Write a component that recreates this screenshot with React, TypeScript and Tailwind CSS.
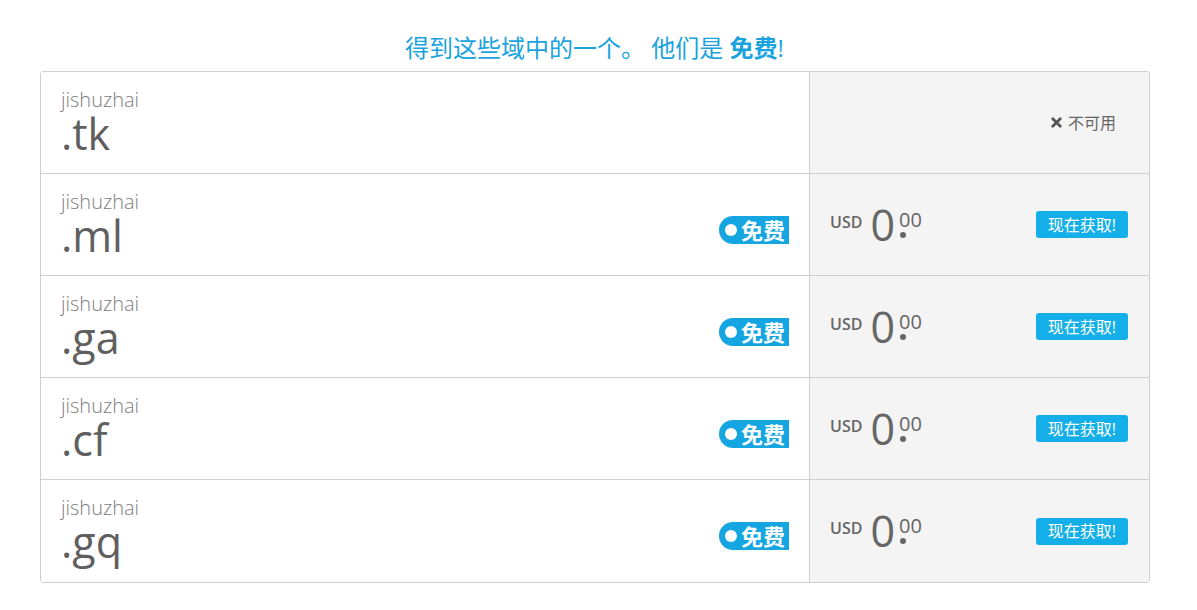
import { X } from "lucide-react";

const FONT = "font-['Open_Sans','Noto_Sans_CJK_SC',sans-serif]";

const domains = [
	{ tld: ".tk", available: false },
	{ tld: ".ml", available: true },
	{ tld: ".ga", available: true },
	{ tld: ".cf", available: true },
	{ tld: ".gq", available: true },
];

function FreeTag() {
	return (
		<div className="flex items-center h-[28px] pl-[6px] pr-[4px] bg-[#15a6e2] text-white rounded-l-full rounded-r-[2px] text-[22px] font-bold leading-none">
			<span className="w-[12px] h-[12px] rounded-full bg-white mr-[4px]" />
			<span>免费</span>
		</div>
	);
}

function Price() {
	return (
		<div className="flex items-start text-[#666]">
			<span className="text-[16px] font-semibold mt-[6px] mr-[8px] leading-none">USD</span>
			<span className="text-[43px] font-normal leading-[34px]">0</span>
			<span className="relative text-[20px] font-normal leading-none mt-[2px] ml-[4px]">
				00
				<span className="absolute left-[1px] top-[22px] w-[6px] h-[6px] rounded-full bg-[#666]" />
			</span>
		</div>
	);
}

function DomainRow({ tld, available, last }: { tld: string; available: boolean; last: boolean }) {
	return (
		<div className={`flex h-[102px] ${last ? "" : "border-b border-[#cfcfcf]"}`}>
			<div className="flex-1 flex justify-between pl-[20px] pr-[20px] bg-white">
				<div className="flex flex-col pt-[16px]">
					<span className="text-[20px] font-light text-[#808080] leading-[24px]">jishuzhai</span>
					<span className="text-[43px] text-[#5f5f5f] leading-[44px]">{tld}</span>
				</div>
				{available && (
					<div className="pt-[42px]">
						<FreeTag />
					</div>
				)}
			</div>
			<div className="w-[340px] border-l border-[#cfcfcf] bg-[#f4f4f4] flex items-center justify-between pl-[20px] pr-[21px]">
				{available ? (
					<>
						<Price />
						<button
							type="button"
							className="h-[27px] px-[12px] bg-[#14aee8] text-white text-[16px] rounded-[3px] leading-none"
						>
							现在获取!
						</button>
					</>
				) : (
					<div className="ml-auto mr-[12px] flex items-center gap-[4px] text-[16px] text-[#666]">
						<X size={15} strokeWidth={4.5} className="text-[#555]" />
						<span>不可用</span>
					</div>
				)}
			</div>
		</div>
	);
}

export default function App() {
	return (
		<div className={`${FONT} bg-white w-[1197px] h-[610px] pt-[31px]`}>
			<h2 className="text-center text-[24px] text-[#1aa3de] leading-[34px] pr-[8px] mb-[6px]">
				得到这些域中的一个。 他们是 <strong className="font-bold">免费</strong>!
			</h2>
			<div className="mx-[40px] w-[1110px] border border-[#cfcfcf] rounded-[3px] overflow-hidden">
				{domains.map((d, i) => (
					<DomainRow key={d.tld} tld={d.tld} available={d.available} last={i === domains.length - 1} />
				))}
			</div>
		</div>
	);
}
